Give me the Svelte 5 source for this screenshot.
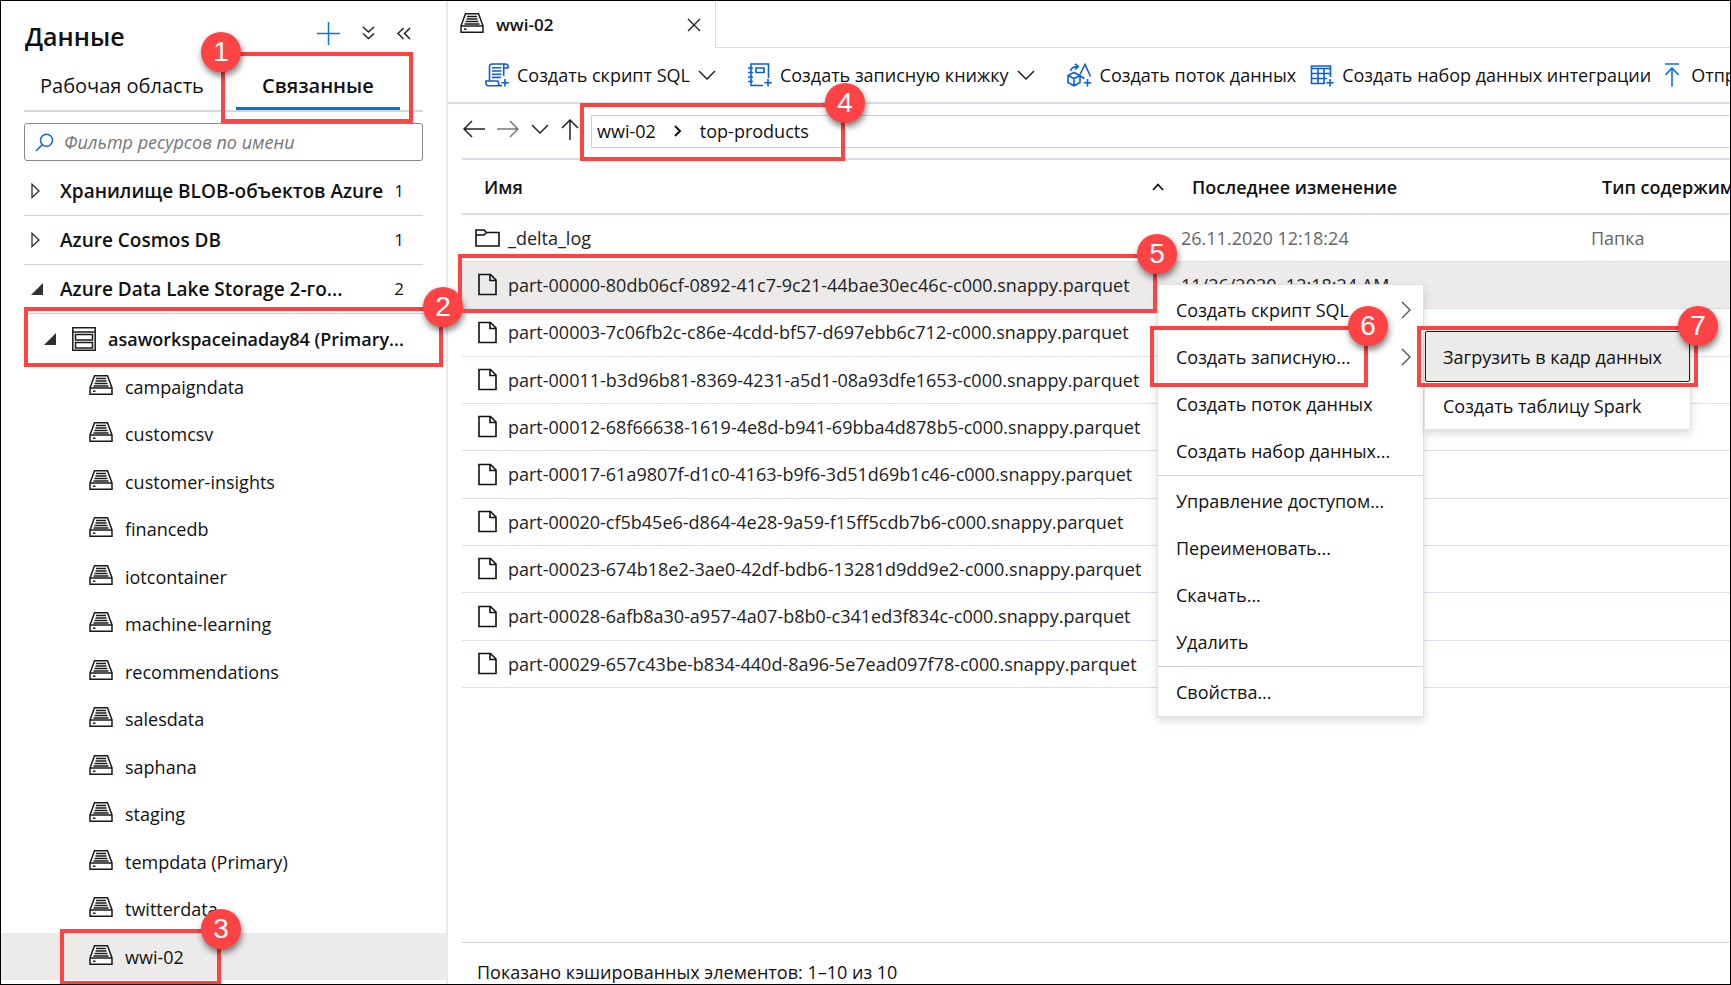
<script>
	let filter = $state('');

	const groups = [
		{ name: 'Хранилище BLOB-объектов Azure', count: 1, open: false },
		{ name: 'Azure Cosmos DB', count: 1, open: false },
		{ name: 'Azure Data Lake Storage 2-го...', count: 2, open: true }
	];

	const containers = [
		'campaigndata',
		'customcsv',
		'customer-insights',
		'financedb',
		'iotcontainer',
		'machine-learning',
		'recommendations',
		'salesdata',
		'saphana',
		'staging',
		'tempdata (Primary)',
		'twitterdata',
		'wwi-02'
	];
	let selected = $state('wwi-02');

	const files = [
		{ name: '_delta_log', folder: true, modified: '26.11.2020 12:18:24', type: 'Папка' },
		{
			name: 'part-00000-80db06cf-0892-41c7-9c21-44bae30ec46c-c000.snappy.parquet',
			modified: '11/26/2020, 12:18:24 AM',
			active: true
		},
		{ name: 'part-00003-7c06fb2c-c86e-4cdd-bf57-d697ebb6c712-c000.snappy.parquet' },
		{ name: 'part-00011-b3d96b81-8369-4231-a5d1-08a93dfe1653-c000.snappy.parquet' },
		{ name: 'part-00012-68f66638-1619-4e8d-b941-69bba4d878b5-c000.snappy.parquet' },
		{ name: 'part-00017-61a9807f-d1c0-4163-b9f6-3d51d69b1c46-c000.snappy.parquet' },
		{ name: 'part-00020-cf5b45e6-d864-4e28-9a59-f15ff5cdb7b6-c000.snappy.parquet' },
		{ name: 'part-00023-674b18e2-3ae0-42df-bdb6-13281d9dd9e2-c000.snappy.parquet' },
		{ name: 'part-00028-6afb8a30-a957-4a07-b8b0-c341ed3f834c-c000.snappy.parquet' },
		{ name: 'part-00029-657c43be-b834-440d-8a96-5e7ead097f78-c000.snappy.parquet' }
	];

	const menu = [
		[
			{ label: 'Создать скрипт SQL', sub: true },
			{ label: 'Создать записную...', sub: true },
			{ label: 'Создать поток данных' },
			{ label: 'Создать набор данных...' }
		],
		[
			{ label: 'Управление доступом...' },
			{ label: 'Переименовать...' },
			{ label: 'Скачать...' },
			{ label: 'Удалить' }
		],
		[{ label: 'Свойства...' }]
	];

	// numbered walkthrough frames drawn over the page
	const steps = [
		{ n: 1, x: 220, y: 51, w: 192, h: 71, left: true },
		{ n: 2, x: 23, y: 306, w: 419, h: 60 },
		{ n: 3, x: 59, y: 928, w: 161, h: 56 },
		{ n: 4, x: 579, y: 102, w: 265, h: 58 },
		{ n: 5, x: 457, y: 253, w: 699, h: 59 },
		{ n: 6, x: 1149, y: 325, w: 218, h: 61 },
		{ n: 7, x: 1416, y: 325, w: 281, h: 61 }
	];
</script>

{#snippet drive()}
	<svg class="drive" viewBox="0 0 24 20" width="24" height="20" fill="none" stroke="#1b1a19">
		<path d="M1 13 5.500 .8H18.500L23 13V19.200H1Z" stroke-width="1.500" fill="#fff" />
		<path d="M1 13H23" stroke-width="1.500" />
		<path d="M7 3.500H17M6.500 6H17.500M5.500 8.500H18.500M4.500 11H19.500" stroke-width="1.300" />
		<path d="M4 16.200H6.500" stroke-width="1.500" />
	</svg>
{/snippet}

{#snippet chevron()}
	<svg width="18" height="10" viewBox="0 0 18 10" fill="none" stroke="#222" stroke-width="1.500">
		<path d="M1 1 9 9 17 1" />
	</svg>
{/snippet}

<div class="app">
	<aside>
		<header>
			<h1>Данные</h1>
			<button aria-label="Добавить">
				<svg width="23" height="23" viewBox="0 0 23 23" stroke="#0078d4" stroke-width="1.500">
					<path d="M11.500 0V23M0 11.500H23" />
				</svg>
			</button>
			<button aria-label="Развернуть все">
				<svg width="13" height="14" viewBox="0 0 13 14" fill="none" stroke="#222" stroke-width="1.500">
					<path d="M1 1 6.500 6 12 1M1 7.500 6.500 12.500 12 7.500" />
				</svg>
			</button>
			<button aria-label="Свернуть панель">
				<svg width="14" height="13" viewBox="0 0 14 13" fill="none" stroke="#222" stroke-width="1.500">
					<path d="M6.500 1 1 6.500 6.500 12M13 1 7.500 6.500 13 12" />
				</svg>
			</button>
		</header>

		<div class="tabs" role="tablist">
			<button role="tab" aria-selected="false">Рабочая область</button>
			<button role="tab" aria-selected="true" class="current">Связанные</button>
		</div>

		<label class="filter">
			<svg width="19" height="19" viewBox="0 0 19 19" fill="none" stroke="#1568c4" stroke-width="1.500">
				<circle cx="11.500" cy="7.300" r="6" />
				<path d="M7.300 11.600 1 18" />
			</svg>
			<input type="text" placeholder="Фильтр ресурсов по имени" aria-label="Фильтр ресурсов по имени" bind:value={filter} />
		</label>

		<ul class="groups">
			{#each groups as group (group.name)}
				<li>
					{#if group.open}
						<svg width="12" height="12" viewBox="0 0 12 12"><path d="M12 0V12H0Z" fill="#323130" /></svg>
					{:else}
						<svg width="12" height="16" viewBox="0 0 12 16" fill="none" stroke="#323130" stroke-width="1.300">
							<path d="M1 1.200V14.500L8 8Z" />
						</svg>
					{/if}
					<span class="name">{group.name}</span>
					<span class="count">{group.count}</span>
				</li>
			{/each}
		</ul>

		<div class="account">
			<svg width="12" height="12" viewBox="0 0 12 12"><path d="M12 0V12H0Z" fill="#323130" /></svg>
			<svg class="store" width="24" height="24" viewBox="0 0 24 24" fill="none" stroke="#1b1a19" stroke-width="1.500">
				<path d="M.8 .8H23.200V23.200H.8ZM.8 5H23.200" />
				<path d="M3.500 7.500H20.500V13H3.500ZM3.500 15.500H20.500V21H3.500Z" />
			</svg>
			<span>asaworkspaceinaday84 (Primary...</span>
		</div>

		<ul class="containers">
			{#each containers as name (name)}
				<li class:selected={name === selected}>
					<button onclick={() => (selected = name)}>
						{@render drive()}
						{name}
					</button>
				</li>
			{/each}
		</ul>
	</aside>

	<main>
		<div class="strip">
			<div class="doc">
				{@render drive()}
				<span>wwi-02</span>
				<button aria-label="Закрыть">
					<svg width="14" height="14" viewBox="0 0 14 14" stroke="#222" stroke-width="1.400">
						<path d="M1 1 13 13M13 1 1 13" />
					</svg>
				</button>
			</div>
			<div class="rest"></div>
		</div>

		<div class="toolbar">
			<button class="split">
				<svg width="24" height="24" viewBox="0 0 24 24" fill="none" stroke="#0b5ed7" stroke-width="1.600">
					<path d="M4.500 18V4C4.500 2 5.500 1 7 1H20.500C22 1 23 2 23 3.200V5H19M20.500 1C19.300 1 18.700 2 18.700 3.200V13" />
					<path d="M13.500 18H1V20C1 21.800 2 22.800 3.500 22.800H17M13.500 18V20C13.500 21.800 14.500 22.800 16 22.800" />
					<path d="M7 4.800H16.500M7 8H16.500M7 11.200H16.500M7 14.400H16" />
					<path d="M20 16V23.500M16.300 19.800H23.800" />
				</svg>
				Создать скрипт SQL
				{@render chevron()}
			</button>
			<button class="split">
				<svg width="24" height="24" viewBox="0 0 24 24" fill="none" stroke="#0b5ed7" stroke-width="1.600">
					<path d="M15 22.500H3V1H20.500V15" />
					<path d="M8 5H16V9.500H8Z" />
					<path d="M0 5H5M0 9.500H5M0 14H5M0 18.500H5" />
					<path d="M20 16V23.500M16.300 19.800H23.800" />
				</svg>
				Создать записную книжку
				{@render chevron()}
			</button>
			<button>
				<svg width="25" height="24" viewBox="0 0 25 24" fill="none" stroke="#0b5ed7" stroke-width="1.600">
					<path d="M1 12.500 7 9.500 13 12.500V19.500L7 22.800 1 19.500ZM1 12.500 7 15.500 13 12.500M7 15.500V22.800" />
					<path d="M3.500 8C4 5 6.500 3.500 11 3.500M8 .8 11.200 3.500 8 6.300" />
					<path d="M13 11.500 18 1.500 23.500 13.500M13 13 17.500 15.500" />
					<path d="M20.500 16V23.500M16.800 19.800H24.300" />
				</svg>
				Создать поток данных
			</button>
			<button>
				<svg width="24" height="24" viewBox="0 0 24 24" fill="none" stroke="#0b5ed7" stroke-width="1.600">
					<path d="M15 20.500H1.500V3H20.500V14M1.500 5.500H20.500M1.500 10.500H20.500M1.500 15.500H17M8 5.500V20.500M14 5.500V20.500" />
					<path d="M20 16V23.500M16.300 19.800H23.800" />
				</svg>
				Создать набор данных интеграции
			</button>
			<button>
				<svg width="14" height="24" viewBox="2 0 14 24" fill="none" stroke="#0b6fe8" stroke-width="1.600">
					<path d="M2 1H16M9 23.500V5M2.500 12 9 5 15.500 12" />
				</svg>
				<span class="upload">Отправить</span>
			</button>
		</div>

		<div class="path">
			<nav aria-label="Навигация">
				<button aria-label="Назад">
					<svg width="22" height="18" viewBox="0 0 22 18" fill="none" stroke="#222" stroke-width="1.500">
						<path d="M22 9H1M9 1 1 9 9 17" />
					</svg>
				</button>
				<button aria-label="Вперед">
					<svg width="22" height="18" viewBox="0 0 22 18" fill="none" stroke="#777" stroke-width="1.500">
						<path d="M0 9H21M13 1 21 9 13 17" />
					</svg>
				</button>
				<button aria-label="Журнал">{@render chevron()}</button>
				<button aria-label="Вверх">
					<svg width="18" height="21" viewBox="0 0 18 21" fill="none" stroke="#222" stroke-width="1.500">
						<path d="M9 21V1M1 9 9 1 17 9" />
					</svg>
				</button>
			</nav>
			<div class="crumbs">
				<a href="#wwi-02">wwi-02</a>
				<svg width="8" height="12" viewBox="0 0 8 12" fill="none" stroke="#111" stroke-width="2">
					<path d="M1 1 6 6 1 11" />
				</svg>
				<a href="#top-products">top-products</a>
			</div>
		</div>

		<table>
			<thead>
				<tr>
					<th class="file">
						<div>
							Имя
							<svg width="12" height="8" viewBox="0 0 12 8" fill="none" stroke="#111" stroke-width="1.800">
								<path d="M1 7 6 1.500 11 7" />
							</svg>
						</div>
					</th>
					<th class="date">Последнее изменение</th>
					<th>Тип содержимого</th>
				</tr>
			</thead>
			<tbody>
				{#each files as file (file.name)}
					<tr class:active={file.active}>
						<td class="file">
							<div>
								{#if file.folder}
									<svg width="25" height="18" viewBox="0 0 25 18" fill="none" stroke="#111" stroke-width="1.600">
										<path d="M1 17V1H9L11.500 3.500H24V17ZM1 6H9L11.500 3.500" />
									</svg>
								{:else}
									<svg width="25" height="23" viewBox="0 0 25 23" fill="none" stroke="#111" stroke-width="1.600">
										<path d="M4 1.500H15.500L21 7V21.500H4ZM15 1.500V7.500H21" />
									</svg>
								{/if}
								{file.name}
							</div>
						</td>
						<td>{file.modified ?? ''}</td>
						<td>{file.type ?? ''}</td>
					</tr>
				{/each}
			</tbody>
		</table>

		<footer>Показано кэшированных элементов: 1–10 из 10</footer>
	</main>

	<div class="menu context" role="menu">
		{#each menu as section}
			<div class="section">
				{#each section as item (item.label)}
					<button role="menuitem">
						{item.label}
						{#if item.sub}
							<svg width="10" height="18" viewBox="0 0 10 18" fill="none" stroke="#555" stroke-width="1.400">
								<path d="M1 1 9 9 1 17" />
							</svg>
						{/if}
					</button>
				{/each}
			</div>
		{/each}
	</div>

	<div class="menu submenu" role="menu">
		<button role="menuitem" class="focused">Загрузить в кадр данных</button>
		<button role="menuitem">Создать таблицу Spark</button>
	</div>

	{#each steps as step (step.n)}
		<div
			class="step"
			class:left={step.left}
			style="left: {step.x}px; top: {step.y}px; width: {step.w}px; height: {step.h}px"
		>
			<span>{step.n}</span>
		</div>
	{/each}
</div>

<style>
	:global(body) {
		margin: 0;
	}
	.app,
	.app * {
		box-sizing: border-box;
	}
	.app {
		position: relative;
		display: flex;
		height: 100vh;
		overflow: hidden;
		border: 1px solid #000;
		background: #fff;
		color: #111;
		font: 18px/24px 'Open Sans', 'Noto Sans', sans-serif;
	}
	button,
	input {
		font: inherit;
		color: inherit;
		background: none;
		border: 0;
		padding: 0;
	}
	button {
		display: flex;
		align-items: center;
		white-space: nowrap;
	}
	svg {
		flex: none;
	}
	ul {
		list-style: none;
		margin: 0;
		padding: 0;
	}
	a {
		color: inherit;
		text-decoration: none;
	}

	/* sidebar */
	aside {
		flex: none;
		width: 447px;
		border-right: 2px solid #eaeaea;
	}
	header {
		display: flex;
		align-items: center;
		gap: 22px;
		height: 64px;
		padding: 0 35px 0 24px;
	}
	h1 {
		flex: 1;
		margin: 0;
		padding-top: 6px;
		font-size: 25px;
		line-height: 32px;
		font-weight: 600;
	}
	.tabs {
		display: flex;
		height: 47px;
		margin: 0 23px;
		border-bottom: 2px solid #d6d6d6;
		font-size: 20px;
	}
	.tabs button {
		height: 45px;
		padding: 0 16px 4px;
	}
	.tabs .current {
		width: 164px;
		margin-left: 16px;
		padding-bottom: 0;
		justify-content: center;
		font-weight: 600;
		border-bottom: 3px solid #0078d4;
	}
	.filter {
		display: flex;
		align-items: center;
		gap: 10px;
		height: 38px;
		margin: 11px 23px 6px;
		padding: 0 10px;
		border: 1px solid #8a8886;
		border-radius: 3px;
	}
	.filter input {
		flex: 1;
		min-width: 0;
		outline: 0;
	}
	.filter input::placeholder {
		color: #767676;
		font-style: italic;
		opacity: 1;
	}
	.groups li {
		display: flex;
		align-items: center;
		height: 49px;
		margin: 0 23px;
		padding: 0 19px 0 7px;
		border-bottom: 1px solid #d2d0ce;
	}
	.name {
		flex: 1;
		min-width: 0;
		padding-left: 17px;
		font-size: 19px;
		font-weight: 600;
		white-space: nowrap;
	}
	.count {
		font-size: 17px;
	}
	.account {
		display: flex;
		align-items: center;
		height: 49px;
		padding-left: 43px;
		font-weight: 600;
		white-space: nowrap;
	}
	.store {
		margin: 0 12px 0 16px;
	}
	.containers li {
		height: 47px;
		padding-left: 88px;
	}
	.containers li:nth-child(even) {
		height: 48px;
	}
	.containers button {
		gap: 12px;
		width: 100%;
		height: 100%;
	}
	.drive {
		margin-bottom: 4px;
	}
	.containers .selected {
		background: #edebe9;
	}

	/* main area */
	main {
		flex: 1;
		min-width: 0;
		display: flex;
		flex-direction: column;
	}
	.strip {
		display: flex;
		height: 47px;
	}
	.doc {
		display: flex;
		align-items: center;
		gap: 12px;
		width: 268px;
		padding: 0 14px 0 12px;
		border-right: 1px solid #dcdcdc;
		font-size: 17px;
		font-weight: 600;
	}
	.doc span {
		flex: 1;
	}
	.rest {
		flex: 1;
		border-bottom: 1px solid #dcdcdc;
	}
	.toolbar {
		display: flex;
		height: 56px;
		padding-left: 37px;
		gap: 14px;
		overflow: hidden;
		border-bottom: 2px solid #dcdce8;
	}
	.toolbar button {
		flex: none;
		gap: 8px;
	}
	.toolbar .split {
		padding-right: 18px;
	}
	.upload {
		padding-left: 4px;
	}
	.path {
		display: flex;
		align-items: center;
		height: 56px;
		margin-left: 14px;
		border-bottom: 2px solid #dcdce8;
	}
	nav {
		display: flex;
		align-items: center;
		gap: 12px;
		padding: 0 12px 4px 1px;
	}
	.crumbs {
		flex: 1;
		display: flex;
		align-items: center;
		gap: 18px;
		height: 33px;
		padding-left: 5px;
		border: 1px solid #cfcfdc;
		border-right: 0;
	}
	table {
		width: calc(100% - 14px);
		margin-left: 14px;
		table-layout: fixed;
		border-collapse: collapse;
	}
	th,
	td {
		padding: 0 0 0 11px;
		height: 47px;
		text-align: left;
		white-space: nowrap;
		border-bottom: 1px solid #d9dfe8;
	}
	tr:nth-child(3n) td {
		height: 48px;
	}
	th {
		height: 54px;
		padding-left: 22px;
		font-weight: 600;
		border-bottom: 2px solid #dcdce8;
	}
	td {
		color: #666;
	}
	td.file {
		padding-left: 13px;
		color: #222;
	}
	.file {
		width: 708px;
	}
	.date {
		width: 410px;
	}
	.file div {
		display: flex;
		align-items: center;
		gap: 8px;
	}
	th div {
		justify-content: space-between;
		padding-right: 6px;
	}
	.active td {
		background: #edebe9;
		color: #222;
	}
	footer {
		height: 42px;
		margin: auto 0 0 14px;
		padding: 17px 0 0 15px;
		border-top: 1px solid #cfcfdc;
	}

	/* menus */
	.menu {
		position: absolute;
		width: 267px;
		background: #fff;
		border: 1px solid #e1e1e1;
		box-shadow: 0 4px 8px rgba(0, 0, 0, 0.14);
	}
	.menu button {
		width: 100%;
		height: 47px;
		padding: 0 12px 0 18px;
		justify-content: space-between;
	}
	.context {
		left: 1156px;
		top: 283px;
	}
	.section {
		padding: 1px 0;
	}
	.section + .section {
		border-top: 1px solid #d0d0e0;
	}
	.submenu {
		left: 1423px;
		top: 329px;
	}
	.menu .focused {
		height: 51px;
		padding-left: 17px;
		background: #edebe9;
		border: 1px solid #201f1e;
		border-radius: 2px;
	}

	/* step frames */
	.step {
		position: absolute;
		border: 4px solid #fd4343;
		pointer-events: none;
	}
	.step span {
		position: absolute;
		top: -24px;
		right: -24px;
		width: 40px;
		height: 40px;
		border-radius: 50%;
		background: #fd4343;
		box-shadow: 1px 4px 6px rgba(0, 0, 0, 0.5);
		color: #fff;
		font: 28px/40px 'Liberation Sans', sans-serif;
		text-align: center;
	}
	.step.left span {
		right: auto;
		left: -24px;
	}
</style>
